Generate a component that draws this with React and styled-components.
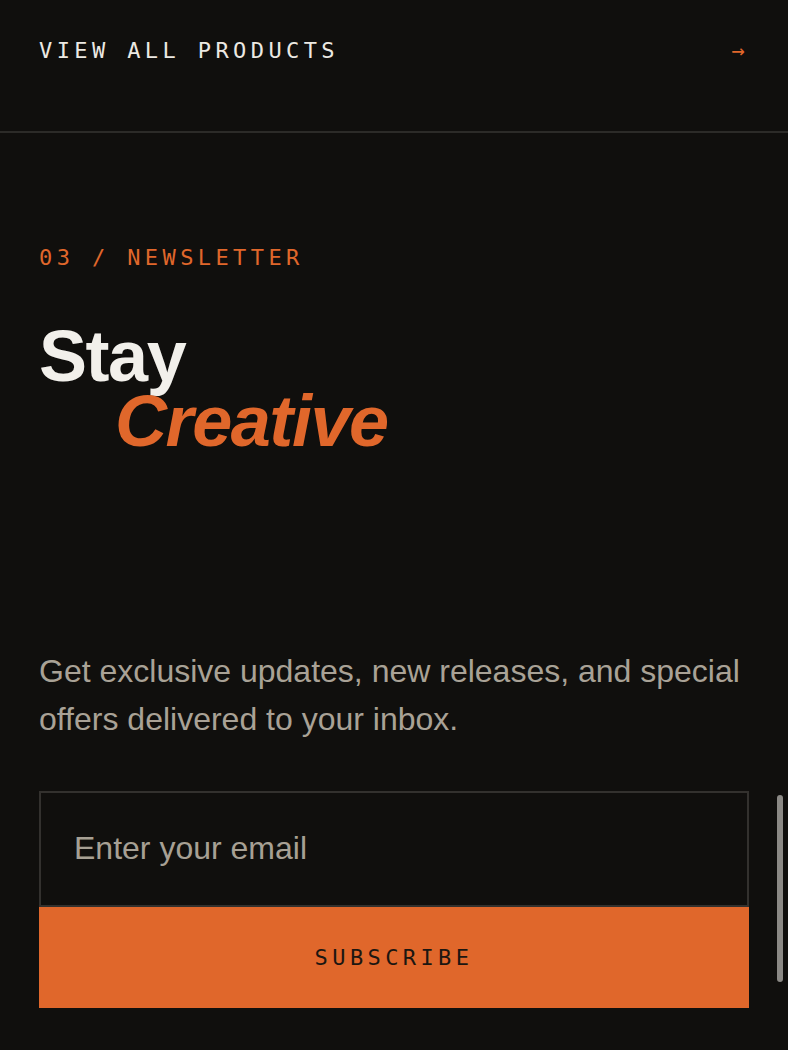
import * as React from 'react';
import styled, { createGlobalStyle } from 'styled-components';

const GlobalStyle = createGlobalStyle`
  html, body {
    margin: 0;
    padding: 0;
    height: 100%;
    overflow: hidden;
    background: #100f0d;
  }
  * {
    box-sizing: border-box;
  }
`;

const mono = `'DejaVu Sans Mono', 'Liberation Mono', monospace`;
const sans = `'Liberation Sans', Arial, Helvetica, sans-serif`;
const orange = '#e0672b';

const Page = styled.div`
  width: 788px;
  height: 1050px;
  background: #100f0d;
  color: #f1eee8;
`;

const ProductsLink = styled.a`
  display: flex;
  justify-content: space-between;
  align-items: flex-start;
  height: 133px;
  padding: 34px 39px 0 39px;
  border-bottom: 2px solid #2c2b28;
  text-decoration: none;
  cursor: pointer;
`;

const MonoLabel = styled.span`
  font-family: ${mono};
  font-size: 22px;
  line-height: 1.5;
  letter-spacing: 0.2em;
  text-transform: uppercase;
  color: ${(p) => p.$color || '#ece9e3'};
`;

const Newsletter = styled.section`
  padding: 108px 39px 0 39px;
  display: flex;
  flex-direction: column;
`;

const Heading = styled.h2`
  margin: 50px 0 0 0;
  font-family: ${sans};
  font-weight: 700;
  font-size: 72px;
  line-height: 0.9;
  letter-spacing: -0.02em;
  color: #f2f0eb;
`;

const HeadLine = styled.span`
  display: block;
  margin-left: ${(p) => (p.$indent ? '76px' : '0')};
  font-style: ${(p) => (p.$accent ? 'italic' : 'normal')};
  color: ${(p) => (p.$accent ? orange : 'inherit')};
`;

const Lead = styled.p`
  margin: 193px 0 0 0;
  font-family: ${sans};
  font-size: 32px;
  line-height: 1.5;
  color: #a9a296;
`;

const Form = styled.form`
  margin-top: 48px;
  display: flex;
  flex-direction: column;
`;

const EmailInput = styled.input`
  height: 116px;
  width: 100%;
  padding: 0 33px;
  background: transparent;
  border: 2px solid #33312e;
  outline: none;
  font-family: ${sans};
  font-size: 32px;
  color: #f1eee8;

  &::placeholder {
    color: #a7a094;
  }
`;

const SubscribeButton = styled.button`
  height: 101px;
  width: 100%;
  border: none;
  background: ${orange};
  cursor: pointer;
  font-family: ${mono};
  font-size: 22px;
  letter-spacing: 0.2em;
  text-transform: uppercase;
  color: #1c1611;
`;

const ScrollThumb = styled.div`
  position: fixed;
  top: 795px;
  right: 5px;
  width: 6px;
  height: 187px;
  border-radius: 3px;
  background: #8b8985;
`;

export default function App() {
  return (
    <>
      <GlobalStyle />
      <Page>
        <ProductsLink>
          <MonoLabel>View all products</MonoLabel>
          <MonoLabel $color={orange}>→</MonoLabel>
        </ProductsLink>

        <Newsletter>
          <MonoLabel $color={orange}>03 / Newsletter</MonoLabel>
          <Heading>
            <HeadLine>Stay</HeadLine>
            <HeadLine $indent $accent>
              Creative
            </HeadLine>
          </Heading>
          <Lead>
            Get exclusive updates, new releases, and special offers delivered
            to your inbox.
          </Lead>
          <Form onSubmit={(e) => e.preventDefault()}>
            <EmailInput type="email" placeholder="Enter your email" />
            <SubscribeButton type="submit">Subscribe</SubscribeButton>
          </Form>
        </Newsletter>
      </Page>
      <ScrollThumb />
    </>
  );
}
